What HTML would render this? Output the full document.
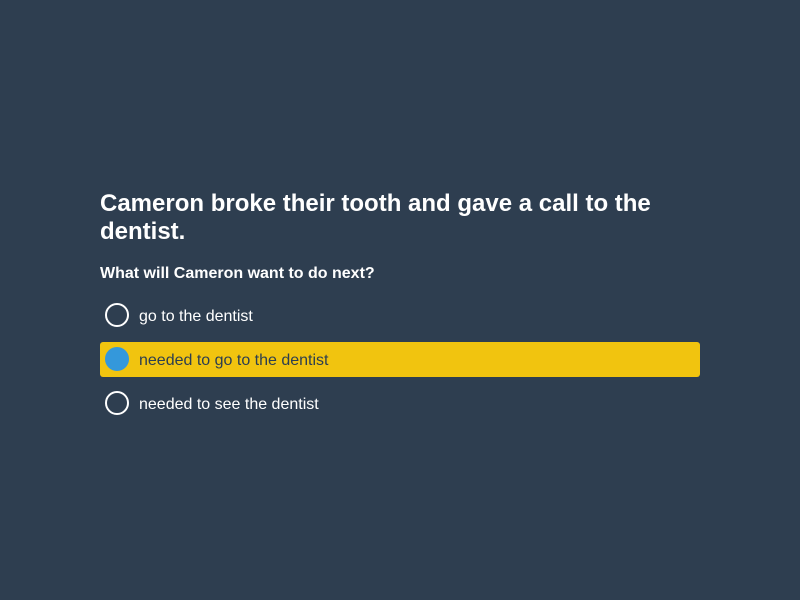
<!DOCTYPE html>
<html><head><style>
body{margin:0;width:800px;height:600px;background:#2e3e50;font-family:"Liberation Sans",Arial,sans-serif;color:#fff;position:relative;overflow:hidden}
h1{position:absolute;left:100px;top:190px;width:600px;margin:0;font-size:24px;line-height:28px;font-weight:bold}
.q{position:absolute;left:100px;top:265px;font-size:16px;font-weight:bold;line-height:18px}
.opt{position:absolute;left:100px;width:600px;height:35px;border-radius:3px;font-size:16px;line-height:35px}
.opt span.r{position:absolute;left:5px;top:5px;width:20px;height:20px;border:2px solid #fff;border-radius:50%}
.opt .t{position:absolute;left:39px;top:1px}
.sel{background:#f1c40f;color:#2c3e50}
.sel span.r{background:#3498db;border-color:#3498db}
</style></head><body>
<h1>Cameron broke their tooth and gave a call to the dentist.</h1>
<div class="q">What will Cameron want to do next?</div>
<div class="opt" style="top:298px"><span class="r"></span><span class="t">go to the dentist</span></div>
<div class="opt sel" style="top:342px"><span class="r"></span><span class="t">needed to go to the dentist</span></div>
<div class="opt" style="top:386px"><span class="r"></span><span class="t">needed to see the dentist</span></div>
</body></html>
